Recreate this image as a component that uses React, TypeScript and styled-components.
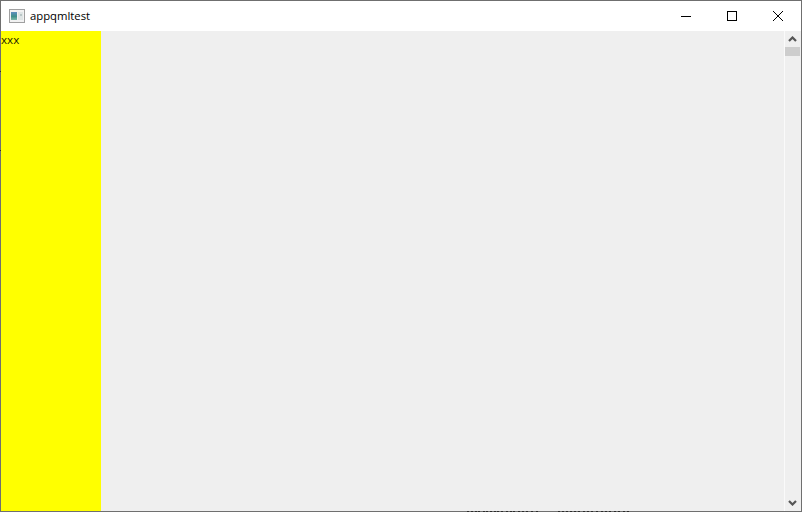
import React from "react";
import styled, { createGlobalStyle } from "styled-components";

const Global = createGlobalStyle`
  html, body { margin: 0; padding: 0; background: #fff; }
  body { font-family: "Open Sans", "Noto Sans", sans-serif; overflow: hidden; }
`;

const Window = styled.div`
  position: relative;
  box-sizing: border-box;
  width: 802px;
  height: 512px;
  border: 1px solid #6f6f6f;
  display: flex;
  flex-direction: column;
`;

const TitleBar = styled.header`
  flex: 0 0 30px;
  display: flex;
  align-items: center;
  background: #fff;
`;

const AppIcon = styled.svg`
  flex: none;
  width: 16px;
  height: 14px;
  margin-left: 8px;
  margin-top: -1px;
`;

const Title = styled.span`
  flex: 1;
  margin-left: 5px;
  font-size: 11.3px;
  color: #000;
  line-height: 16px;
`;

const CaptionButton = styled.div`
  flex: none;
  width: 46px;
  height: 30px;
  display: flex;
  align-items: center;
  justify-content: center;
`;

const CaptionIcon = styled.svg`
  width: 10px;
  height: 10px;
  display: block;
  shape-rendering: crispEdges;
`;

const CloseIcon = styled(CaptionIcon)`
  shape-rendering: auto;
`;

const Body = styled.main`
  flex: 1;
  min-height: 0;
  display: flex;
  background: #efefef;
`;

const Sidebar = styled.aside`
  flex: 0 0 100px;
  background: #ffff00;
`;

const SidebarLabel = styled.div`
  font-size: 11.6px;
  line-height: 16px;
  padding-top: 1px;
  color: #222200;
`;

const Content = styled.div`
  flex: 1;
`;

const ScrollBar = styled.div`
  flex: 0 0 16px;
  box-sizing: content-box;
  border-left: 1px solid #fafafa;
  display: flex;
  flex-direction: column;
  background: #efefef;
`;

const ArrowBox = styled.div`
  flex: 0 0 16px;
  padding-right: 1px;
  display: flex;
  align-items: center;
  justify-content: center;
`;

const BottomArrowBox = styled(ArrowBox)`
  margin-top: auto;
`;

const Thumb = styled.div`
  flex: 0 0 9px;
  margin-right: 1px;
  background: #cdcdcd;
`;

const Arrow = styled.svg`
  width: 9px;
  height: 6px;
  display: block;
`;

const EdgeText = styled.svg`
  position: absolute;
  left: 465px;
  bottom: -1px;
  width: 166px;
  height: 1px;
  display: block;
`;

const LeftTick = styled.div<{ $top: number }>`
  position: absolute;
  left: -1px;
  top: ${(p) => p.$top}px;
  width: 1px;
  height: 1px;
  background: #2e2e2e;
`;

const edgeSpecks = [1, 5, 9, 12, 17, 20, 24, 28, 31, 35, 40, 44, 47, 52, 56, 60, 65, 70, 92, 96, 100, 104, 108, 112, 117, 121, 125, 130, 135, 139, 143, 148, 152, 157, 161];

export default function App() {
  return (
    <>
      <Global />
      <Window>
        <TitleBar>
          <AppIcon viewBox="0 0 16 14">
            <defs>
              <linearGradient id="pane" x1="0" y1="0" x2="0" y2="1">
                <stop offset="0" stopColor="#5f8fc0" />
                <stop offset="0.55" stopColor="#3f8f8a" />
                <stop offset="1" stopColor="#7fb8a8" />
              </linearGradient>
            </defs>
            <rect x="0.5" y="0.5" width="15" height="13" fill="#f2f2f2" stroke="#a0a0a0" />
            <rect x="2" y="3" width="6" height="8" fill="url(#pane)" />
            <rect x="9" y="3" width="5" height="8" fill="#dfe5e5" />
            <rect x="11" y="5" width="2" height="2" fill="#b9c6c6" />
          </AppIcon>
          <Title>appqmltest</Title>
          <CaptionButton>
            <CaptionIcon viewBox="0 0 10 10">
              <rect x="0" y="5" width="10" height="1" fill="#000" />
            </CaptionIcon>
          </CaptionButton>
          <CaptionButton>
            <CaptionIcon viewBox="0 0 10 10">
              <rect x="0.5" y="0.5" width="9" height="9" fill="none" stroke="#000" />
            </CaptionIcon>
          </CaptionButton>
          <CaptionButton>
            <CloseIcon viewBox="0 0 10 10">
              <path d="M0 0L10 10M10 0L0 10" stroke="#000" strokeWidth="1" fill="none" />
            </CloseIcon>
          </CaptionButton>
        </TitleBar>
        <Body>
          <Sidebar>
            <SidebarLabel>xxx</SidebarLabel>
          </Sidebar>
          <Content />
          <ScrollBar>
            <ArrowBox>
              <Arrow viewBox="0 0 9 6">
                <path d="M1 5L4.5 1.5L8 5" stroke="#555" strokeWidth="2.2" fill="none" />
              </Arrow>
            </ArrowBox>
            <Thumb />
            <BottomArrowBox>
              <Arrow viewBox="0 0 9 6">
                <path d="M1 1L4.5 4.5L8 1" stroke="#555" strokeWidth="2.2" fill="none" />
              </Arrow>
            </BottomArrowBox>
          </ScrollBar>
        </Body>
        <LeftTick $top={70} />
        <LeftTick $top={149} />
        <EdgeText viewBox="0 0 166 1">
          {edgeSpecks.map((x) => (
            <rect key={x} x={x} y="0" width="2" height="1" fill="#2a2a2a" />
          ))}
        </EdgeText>
      </Window>
    </>
  );
}
